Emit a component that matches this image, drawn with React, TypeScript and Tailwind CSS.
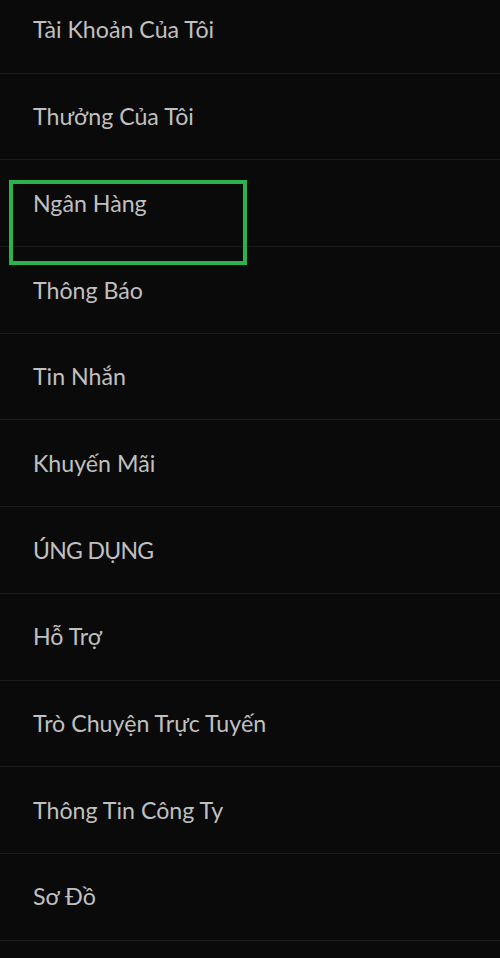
const items = [
  { label: 'Tài Khoản Của Tôi' },
  { label: 'Thưởng Của Tôi' },
  { label: 'Ngân Hàng' },
  { label: 'Thông Báo' },
  { label: 'Tin Nhắn' },
  { label: 'Khuyến Mãi' },
  { label: 'ÚNG DỤNG', tight: true },
  { label: 'Hỗ Trợ' },
  { label: 'Trò Chuyện Trực Tuyến' },
  { label: 'Thông Tin Công Ty' },
  { label: 'Sơ Đồ' },
]

export default function App() {
  return (
    <div
      className="relative w-[500px] h-[958px] overflow-hidden bg-[#0a0a0a]"
      style={{ fontFamily: 'Lato, "Noto Sans", sans-serif' }}
    >
      <ul className="-mt-[13px] flex flex-col">
        {items.map((item) => (
          <li
            key={item.label}
            className={
              item.tight
                ? 'flex h-[86.7px] items-center border-b border-[#1c1c1c] pl-[33px] text-[23px] text-[#c0c0c0] tracking-[-0.03em]'
                : 'flex h-[86.7px] items-center border-b border-[#1c1c1c] pl-[33px] text-[23.2px] text-[#c0c0c0]'
            }
          >
            {item.label}
          </li>
        ))}
      </ul>

      {/* highlight box */}
      <div className="absolute left-[9px] top-[180px] h-[85px] w-[238px] border-4 border-[#2bb24c]" />
    </div>
  )
}
